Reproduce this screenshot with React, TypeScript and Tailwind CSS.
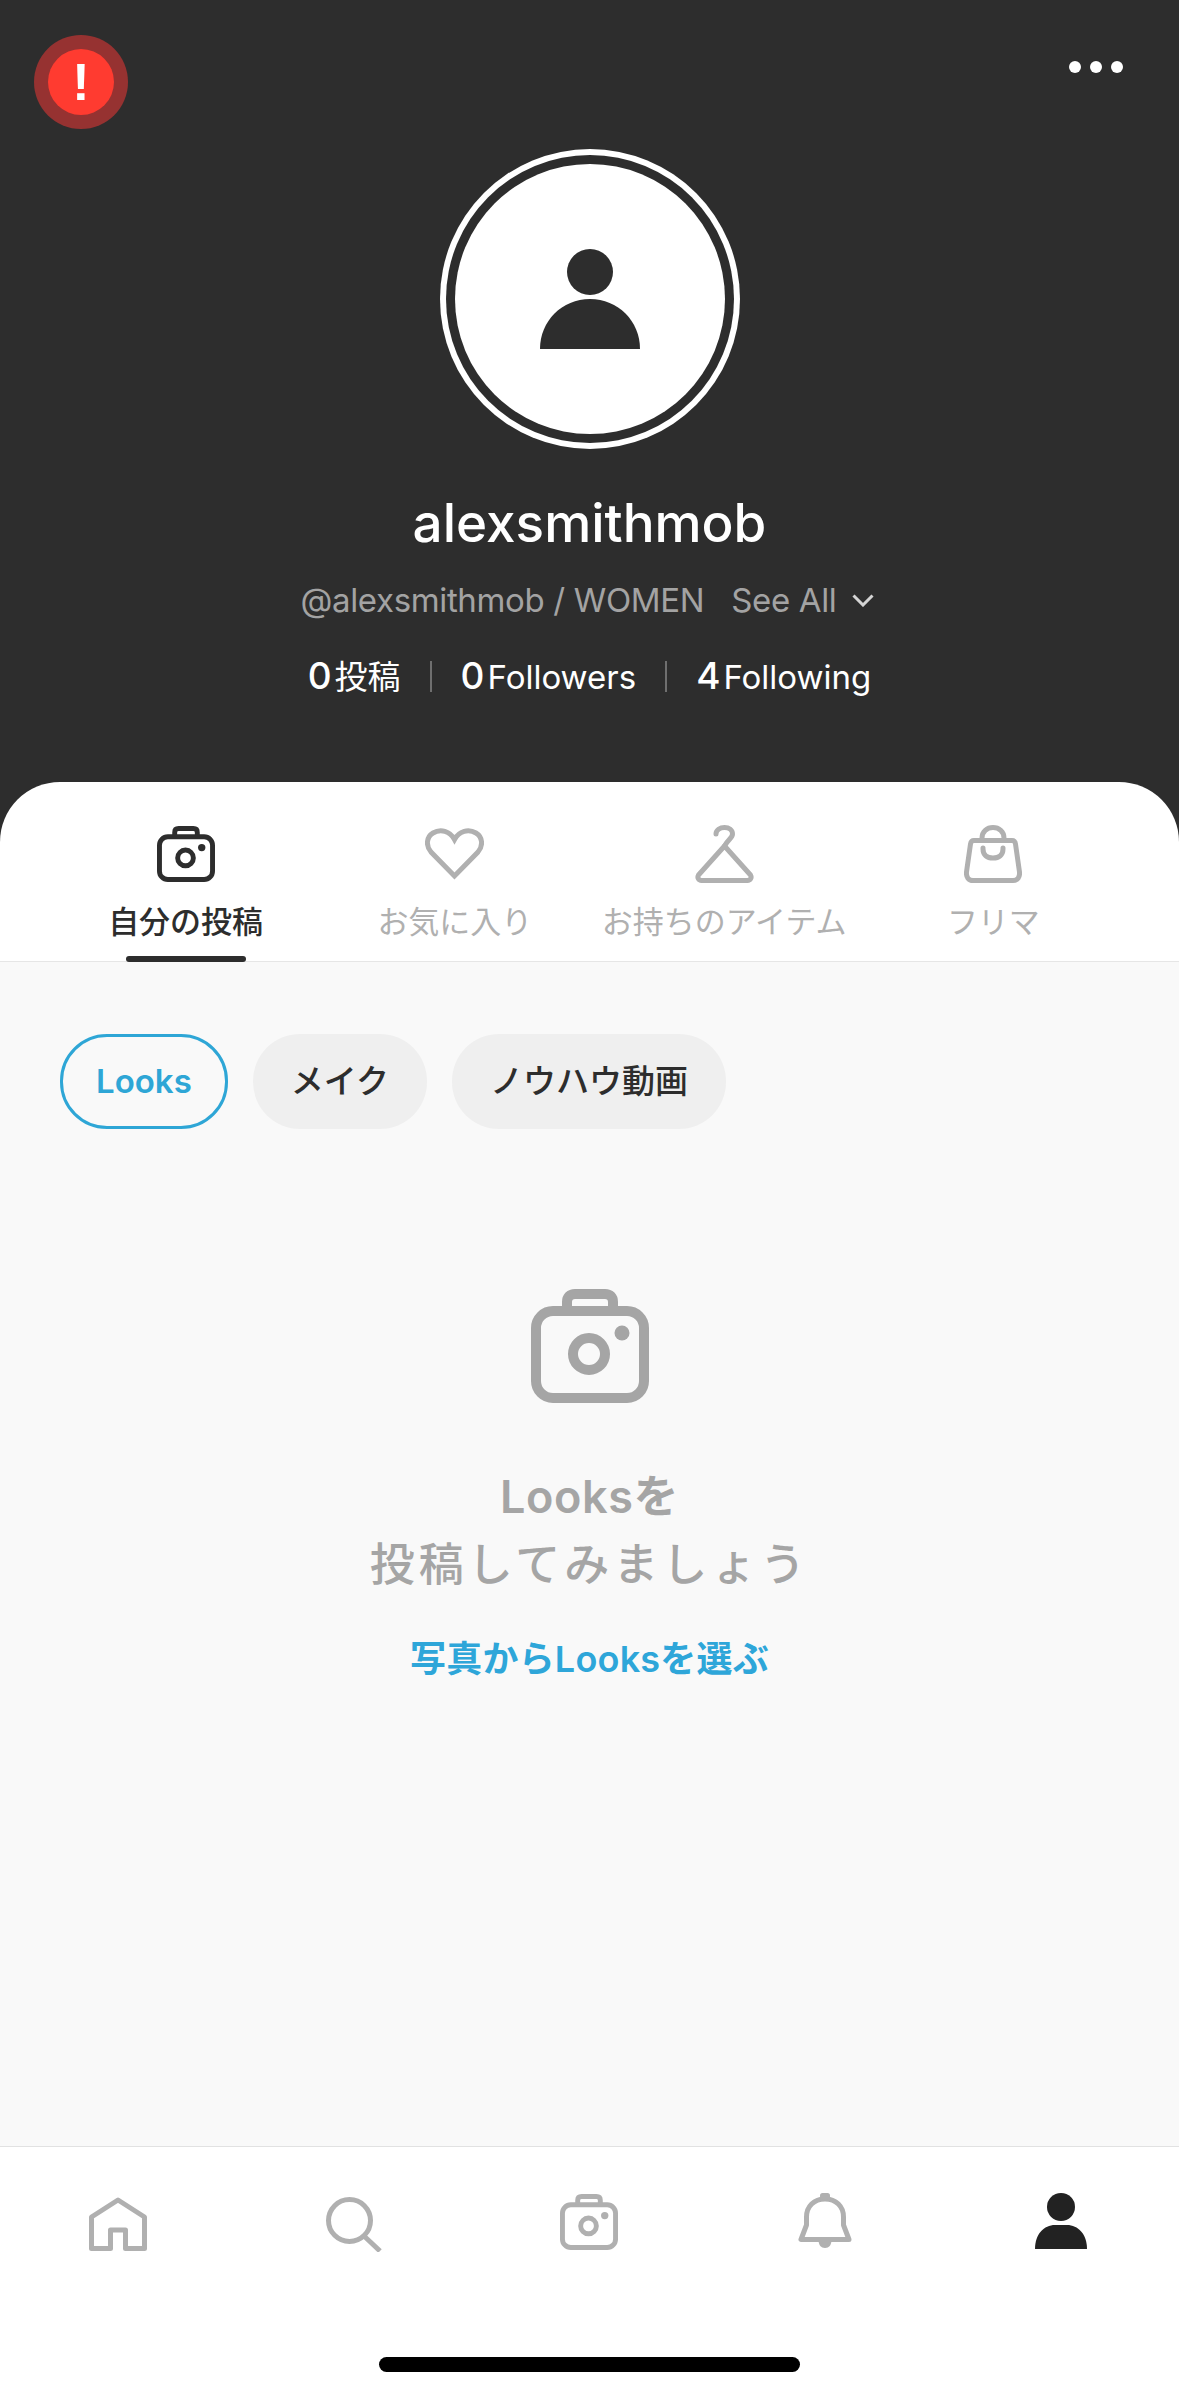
import type { ReactNode } from "react";

const fontStack = "font-[Inter,'Noto_Sans_CJK_JP',sans-serif]";

function CameraIcon({ className, stroke }: { className: string; stroke: string }) {
  return (
    <svg viewBox="0 0 118 114" className={className} fill="none" stroke={stroke} strokeWidth={10}>
      <rect x="5" y="22" width="108" height="87" rx="17" />
      <path d="M36 22V13C36 8 39 5 44 5H74C79 5 82 8 82 13V22" />
      <circle cx="58" cy="65" r="16" />
      <circle cx="91" cy="44" r="7.5" fill={stroke} stroke="none" />
    </svg>
  );
}

function HeartIcon() {
  return (
    <svg viewBox="0 0 59 52" className="h-[52px] w-[59px]" fill="none" stroke="#b0b0b0" strokeWidth={5}>
      <path d="M29.5 48L6 24C0.5 17.5 1.5 9 8 5C15.5 0.5 25 3 29.5 11.5C34 3 43.5 0.5 51 5C57.5 9 58.5 17.5 53 24Z" />
    </svg>
  );
}

function HangerIcon() {
  return (
    <svg viewBox="0 0 59 58" className="h-[58px] w-[59px]" fill="none" stroke="#b0b0b0" strokeWidth={5} strokeLinecap="round" strokeLinejoin="round">
      <path d="M21 9C21 5 25 2.5 29.5 2.5C34 2.5 37.5 5 37.5 9C37.5 13 33 14.5 29.5 21" />
      <path d="M29.5 21L3.5 50C2 52.5 3.5 55.5 6.5 55.5H52.5C55.5 55.5 57 52.5 55.5 50Z" />
    </svg>
  );
}

function BagIcon() {
  return (
    <svg viewBox="0 0 58 58" className="h-[58px] w-[58px]" fill="none" stroke="#b0b0b0" strokeWidth={5} strokeLinecap="round">
      <path d="M10 15.5H48C50 15.5 51.2 17 51.5 19L55.5 47C56 52 53.5 55.5 49 55.5H9C4.5 55.5 2 52 2.5 47L6.5 19C6.8 17 8 15.5 10 15.5Z" />
      <path d="M18 15V13C18 6.5 23 2.5 29 2.5C35 2.5 40 6.5 40 13V15" />
      <path d="M19 23V24C19 30 23 33 29 33C35 33 39 30 39 24V23" />
    </svg>
  );
}

function HomeIcon() {
  return (
    <svg viewBox="0 0 58 54" className="h-[54px] w-[58px]" fill="none" stroke="#b0b0b0" strokeWidth={5} strokeLinejoin="round">
      <path d="M29 3L2.5 20V51.5H21.5V33H36.5V51.5H55.5V20Z" />
    </svg>
  );
}

function SearchIcon() {
  return (
    <svg viewBox="0 0 56 55" className="h-[55px] w-[56px]" fill="none" stroke="#b0b0b0" strokeWidth={5}>
      <circle cx="23.5" cy="23.5" r="21" />
      <path d="M38 39L54 54" />
    </svg>
  );
}

function BellIcon() {
  return (
    <svg viewBox="0 0 54 55" className="h-[55px] w-[54px]" fill="none" stroke="#b0b0b0" strokeWidth={5} strokeLinejoin="round">
      <path d="M27 6C16 6 8.5 13.5 8.5 24V32L3 46.5H51L45.5 32V24C45.5 13.5 38 6 27 6Z" />
      <rect x="22" y="0" width="10" height="7" rx="2.5" fill="#b0b0b0" stroke="none" />
      <path d="M20.5 47C20.5 52 23 55 27 55C31 55 33.5 52 33.5 47Z" fill="#b0b0b0" stroke="none" />
    </svg>
  );
}

function PersonSolid() {
  return (
    <svg viewBox="0 0 52 56" className="h-[56px] w-[52px]" fill="#222222">
      <ellipse cx="26" cy="14" rx="14" ry="14" />
      <path d="M0 56C0 41 9 32 20 32H32C43 32 52 41 52 56Z" />
    </svg>
  );
}

function Tab({ icon, label, active }: { icon: ReactNode; label: string; active?: boolean }) {
  return (
    <div className="relative flex flex-col items-center">
      <div className="flex h-[60px] items-center">{icon}</div>
      <div
        className={`mt-[18px] whitespace-nowrap text-[31px] leading-[40px] ${
          active ? "font-medium text-[#2d2d2d]" : "text-[#b0b0b0]"
        }`}
      >
        {label}
      </div>
      {active && <div className="absolute bottom-[-1px] h-[6px] w-[120px] rounded-full bg-[#2d2d2d]" />}
    </div>
  );
}

function Chip({ label, active }: { label: string; active?: boolean }) {
  return (
    <div
      className={`flex h-[95px] items-center rounded-[47px] text-[33px] font-medium ${
        active
          ? "border-[3px] border-[#2ea6d6] px-[33px] font-semibold text-[#2ea6d6]"
          : "bg-[#efefef] px-[38px] text-[#2d2d2d]"
      }`}
    >
      {label}
    </div>
  );
}

function Stat({ count, label }: { count: string; label: string }) {
  return (
    <div className="flex items-baseline">
      <span className="mr-[3px] text-[37px] font-medium">{count}</span>
      <span className="text-[33px]">{label}</span>
    </div>
  );
}

export default function App() {
  return (
    <div className={`flex h-[2396px] w-[1179px] flex-col bg-[#2d2d2d] ${fontStack}`}>
      {/* profile header */}
      <header className="flex h-[782px] flex-col items-center text-white">
        <div className="flex w-full items-start justify-between pl-[34px] pr-[56px] pt-[35px]">
          <div className="flex h-[94px] w-[94px] items-center justify-center rounded-full bg-[#963231]">
            <div className="flex h-[66px] w-[66px] items-center justify-center rounded-full bg-[#ff3b30] font-['Liberation_Sans',sans-serif] text-[52px] font-bold leading-none">
              !
            </div>
          </div>
          <div className="mt-[26px] flex gap-[9px]">
            <span className="h-[12px] w-[12px] rounded-full bg-white" />
            <span className="h-[12px] w-[12px] rounded-full bg-white" />
            <span className="h-[12px] w-[12px] rounded-full bg-white" />
          </div>
        </div>

        <div className="mt-[20px] h-[300px] w-[300px] rounded-full bg-white p-[6px]">
          <div className="h-full w-full rounded-full bg-[#2d2d2d] p-[9px]">
            <div className="flex h-full w-full items-center justify-center rounded-full bg-white">
              <svg viewBox="0 0 100 100" className="h-[100px] w-[100px]" fill="#2d2d2d">
                <circle cx="50" cy="23" r="23" />
                <path d="M0 100C0 72 22 50 50 50C78 50 100 72 100 100Z" />
              </svg>
            </div>
          </div>
        </div>

        <h1 className="mt-[44px] text-[53px] font-medium leading-[60px]">alexsmithmob</h1>

        <div className="mr-[5px] mt-[27px] flex items-center text-[33px] leading-[40px] tracking-[-0.35px] text-[#a3a3a3]">
          <span>@alexsmithmob / WOMEN</span>
          <span className="ml-[27px]">See All</span>
          <svg viewBox="0 0 22 13" className="ml-[15px] h-[13px] w-[22px]" fill="none" stroke="#d4d4d4" strokeWidth={3}>
            <path d="M1.5 1.5L11 11L20.5 1.5" />
          </svg>
        </div>

        <div className="mt-[36px] flex items-center leading-[40px]">
          <Stat count="0" label="投稿" />
          <span className="mx-[29px] h-[31px] w-[2px] bg-[#6f6f6f]" />
          <Stat count="0" label="Followers" />
          <span className="mx-[29px] h-[31px] w-[2px] bg-[#6f6f6f]" />
          <Stat count="4" label="Following" />
        </div>
      </header>

      <div className="flex flex-1 flex-col overflow-hidden rounded-t-[60px] bg-white">
        {/* section tabs */}
        <nav className="grid h-[180px] grid-cols-4 border-b border-[#e6e6e6] px-[51px] pt-[42px]">
          <Tab active label="自分の投稿" icon={<CameraIcon className="h-[56px] w-[58px]" stroke="#2d2d2d" />} />
          <Tab label="お気に入り" icon={<HeartIcon />} />
          <Tab label="お持ちのアイテム" icon={<HangerIcon />} />
          <Tab label="フリマ" icon={<BagIcon />} />
        </nav>

        <main className="flex flex-1 flex-col bg-[#f9f9f9] pt-[72px]">
          <div className="flex gap-[25px] pl-[60px]">
            <Chip active label="Looks" />
            <Chip label="メイク" />
            <Chip label="ノウハウ動画" />
          </div>

          <div className="mt-[160px] flex flex-col items-center">
            <CameraIcon className="h-[114px] w-[118px]" stroke="#a5a5a5" />
            <p className="mt-[60px] text-center text-[45px] font-semibold leading-[68px] text-[#a5a5a5]">
              <span className="tracking-[0.6px]">Looksを</span>
              <br />
              <span className="font-medium tracking-[4px]">投稿してみましょう</span>
            </p>
            <a className="mt-[36px] text-[36px] font-semibold leading-[48px] tracking-[0.2px] text-[#2ea6d9]">写真からLooksを選ぶ</a>
          </div>
        </main>

        {/* bottom tab bar */}
        <footer className="flex h-[250px] flex-col border-t border-[#e2e2e2] bg-white">
          <div className="grid h-[106px] grid-cols-5 justify-items-center pt-[46px]">
            <div className="pt-[4px]"><HomeIcon /></div>
            <div className="pt-[4px]"><SearchIcon /></div>
            <div><CameraIcon className="h-[58px] w-[58px]" stroke="#b0b0b0" /></div>
            <div><BellIcon /></div>
            <div><PersonSolid /></div>
          </div>
          <div className="mt-[104px] flex justify-center">
            <div className="h-[15px] w-[421px] rounded-full bg-black" />
          </div>
        </footer>
      </div>
    </div>
  );
}
